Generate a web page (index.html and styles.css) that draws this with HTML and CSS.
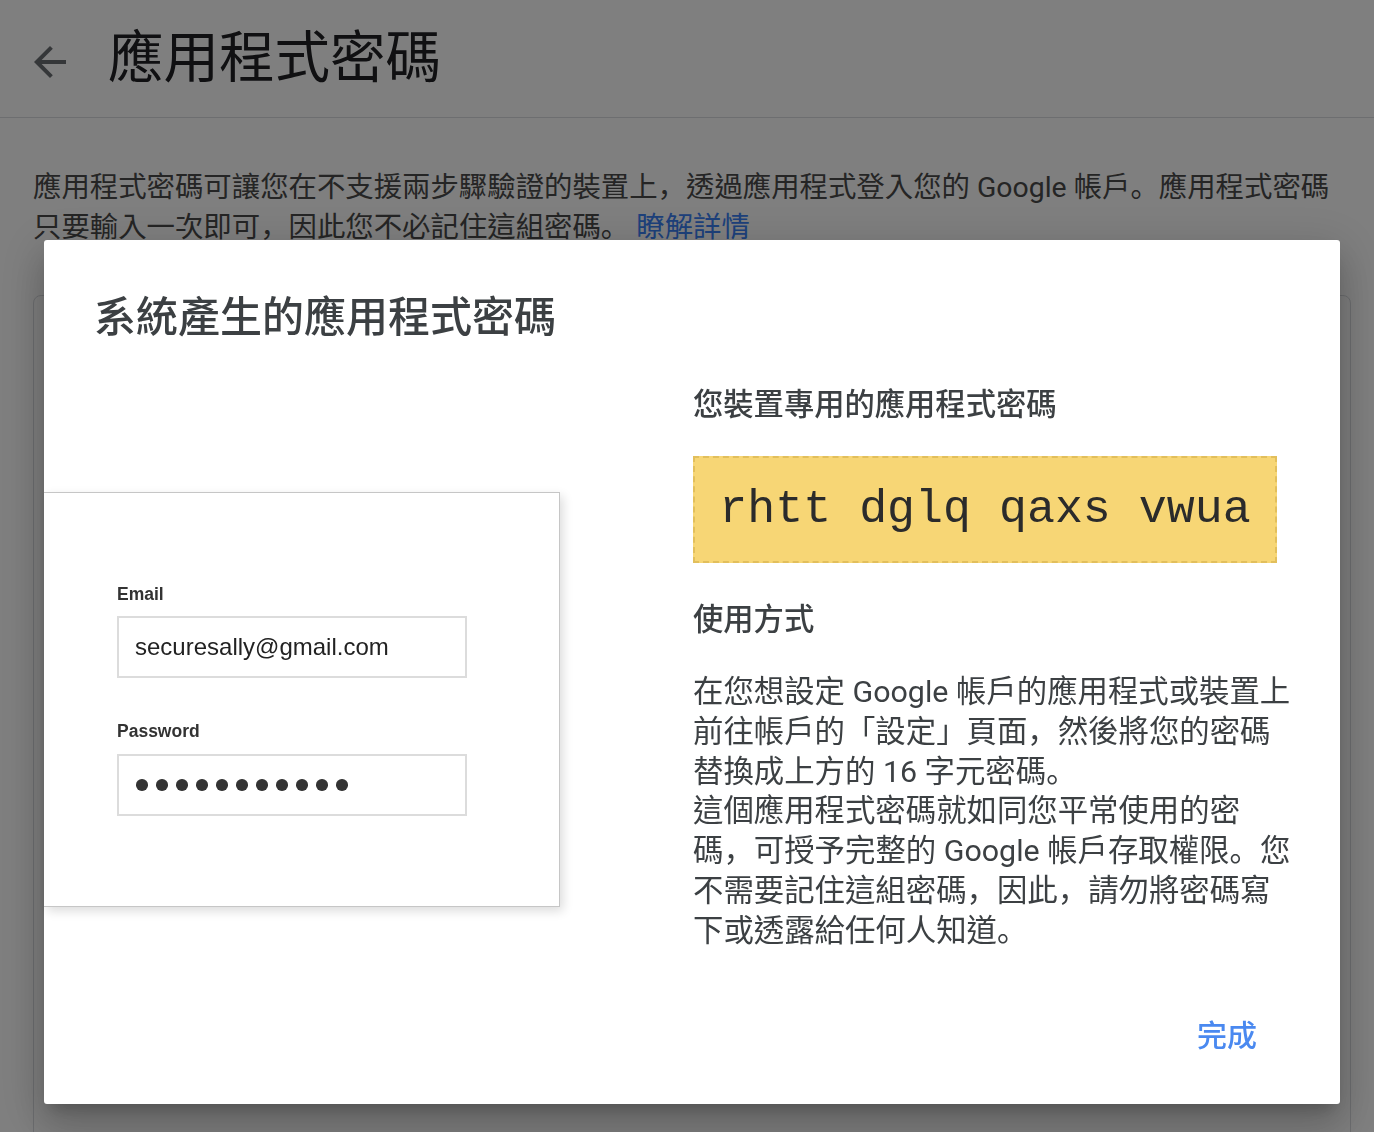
FILE: index.html
```html
<!DOCTYPE html>
<html>
<head>
<meta charset="utf-8">
<title>應用程式密碼</title>
<link rel="stylesheet" href="styles.css">
</head>
<body>
<div class="page">
  <header class="topbar">
    <svg class="back" viewBox="0 0 24 24" width="48" height="48" aria-hidden="true"><path d="M20 11H7.83l5.59-5.59L12 4l-8 8 8 8 1.41-1.41L7.83 13H20v-2z" fill="currentColor"/></svg>
    <h1 class="page-title">應用程式密碼</h1>
  </header>
  <p class="intro">應用程式密碼可讓您在不支援兩步驟驗證的裝置上<span class="p" lang="ja">，</span>透過應用程式登入您的 Google 帳戶<span class="p" lang="ja">。</span>應用程式密碼<br>只要輸入一次即可<span class="p" lang="ja">，</span>因此您不必記住這組密碼<span class="p" lang="ja">。</span> <a class="link" href="#">瞭解詳情</a></p>
  <div class="card-bg"></div>
</div>
<div class="scrim"></div>
<div class="dialog">
  <h2 class="dialog-title">系統產生的應用程式密碼</h2>
  <div class="dialog-body">
    <div class="illus">
      <div class="login-card">
        <div class="field-label">Email</div>
        <div class="field">securesally@gmail.com</div>
        <div class="field-label field-label-2">Password</div>
        <div class="field field-pass">
          <span class="dot"></span><span class="dot"></span><span class="dot"></span><span class="dot"></span><span class="dot"></span><span class="dot"></span><span class="dot"></span><span class="dot"></span><span class="dot"></span><span class="dot"></span><span class="dot"></span>
        </div>
      </div>
    </div>
    <div class="info">
      <h3 class="info-head">您裝置專用的應用程式密碼</h3>
      <div class="code-box">rhtt dglq qaxs vwua</div>
      <h3 class="info-head usage-head">使用方式</h3>
      <p class="usage-text">在您想設定 Google 帳戶的應用程式或裝置上<br>前往帳戶的「設定」頁面<span class="p" lang="ja">，</span>然後將您的密碼<br>替換成上方的 16 字元密碼<span class="p" lang="ja">。</span><br>這個應用程式密碼就如同您平常使用的密<br>碼<span class="p" lang="ja">，</span>可授予完整的 Google 帳戶存取權限<span class="p" lang="ja">。</span>您<br>不需要記住這組密碼<span class="p" lang="ja">，</span>因此<span class="p" lang="ja">，</span>請勿將密碼寫<br>下或透露給任何人知道<span class="p" lang="ja">。</span></p>
    </div>
  </div>
  <div class="dialog-actions">
    <button class="done" type="button">完成</button>
  </div>
</div>
</body>
</html>
```
FILE: styles.css
```css
html, body {
  margin: 0;
  height: 100%;
  overflow: hidden;
}
body {
  background: #ffffff;
  font-family: Roboto, "Noto Sans CJK TC", sans-serif;
  color: #202124;
}
.p {
  font-family: "Noto Sans CJK JP", "Noto Sans CJK TC", sans-serif;
  line-height: 1;
}
.page {
  display: flex;
  flex-direction: column;
}
.topbar {
  height: 117px;
  border-bottom: 1px solid #dadce0;
  display: flex;
  align-items: center;
  padding-left: 26px;
}
.back {
  color: #6b6f73;
  margin-top: 6px;
  flex: none;
}
.page-title {
  margin: 0 0 0 34px;
  font-size: 55.5px;
  font-weight: 400;
  line-height: 70px;
  color: #202124;
}
.intro {
  margin: 0;
  padding: 50px 33px 0;
  font-size: 28.4px;
  line-height: 40px;
  color: #4a4a4a;
  white-space: nowrap;
}
.link {
  color: #3b82f6;
  text-decoration: none;
}
.card-bg {
  margin: 47px 23px 0 33px;
  height: 900px;
  border: 1px solid #dadce0;
  border-radius: 8px;
  background: #ffffff;
}
.scrim {
  position: fixed;
  inset: 0;
  background: rgba(0, 0, 0, 0.5);
}
.dialog {
  position: fixed;
  left: 44px;
  top: 240px;
  width: 1296px;
  height: 864px;
  background: #ffffff;
  border-radius: 3px;
  box-shadow: 0 24px 38px 3px rgba(0,0,0,.14), 0 9px 46px 8px rgba(0,0,0,.12), 0 11px 15px -7px rgba(0,0,0,.2);
  display: flex;
  flex-direction: column;
}
.dialog-title {
  margin: 0;
  padding: 50px 50px 0;
  font-size: 42px;
  line-height: 56px;
  font-weight: 500;
  color: #3c4043;
}
.dialog-body {
  display: flex;
}
.illus {
  width: 649px;
  flex: none;
}
.login-card {
  margin-top: 146px;
  width: 516px;
  box-sizing: border-box;
  border: 1px solid #c6c6c6;
  border-left: none;
  padding: 91px 0 90px 73px;
  box-shadow: 3px 4px 10px rgba(0, 0, 0, 0.14);
  font-family: "Liberation Sans", Arial, sans-serif;
  background: #ffffff;
}
.field-label {
  font-size: 17.5px;
  line-height: 20px;
  font-weight: 700;
  color: #333333;
  margin-bottom: 12px;
}
.field-label-2 {
  margin-top: 43px;
  margin-bottom: 13px;
}
.field {
  width: 350px;
  height: 62px;
  box-sizing: border-box;
  border: 2px solid #dcdcdc;
  padding-left: 16px;
  display: flex;
  align-items: center;
  font-size: 24px;
  color: #222222;
}
.field-pass {
  padding-left: 17px;
  gap: 8.5px;
}
.dot {
  width: 11.5px;
  height: 11.5px;
  border-radius: 50%;
  background: #333333;
  flex: none;
}
.info {
  width: 620px;
  padding-top: 39px;
}
.info-head {
  margin: 0;
  font-size: 30.3px;
  line-height: 40px;
  font-weight: 500;
  color: #3c4043;
}
.code-box {
  margin-top: 31px;
  width: 584px;
  height: 107px;
  box-sizing: border-box;
  border: 2px dashed #e2bf5c;
  background: #f7d675;
  display: flex;
  align-items: center;
  justify-content: center;
  font-family: "Liberation Mono", "Courier New", monospace;
  font-size: 46.6px;
  color: #2b2b2b;
  white-space: nowrap;
}
.usage-head {
  margin-top: 37px;
}
.usage-text {
  margin: 32px 0 0;
  font-size: 30.4px;
  line-height: 39.8px;
  color: #3c4043;
  white-space: nowrap;
}
.dialog-actions {
  margin-top: auto;
  display: flex;
  justify-content: flex-end;
  padding: 0 83px 48px 0;
}
.done {
  background: none;
  border: none;
  padding: 0;
  font-family: Roboto, "Noto Sans CJK TC", sans-serif;
  font-size: 30px;
  line-height: 40px;
  font-weight: 500;
  color: #4a89f0;
  cursor: pointer;
}
```
